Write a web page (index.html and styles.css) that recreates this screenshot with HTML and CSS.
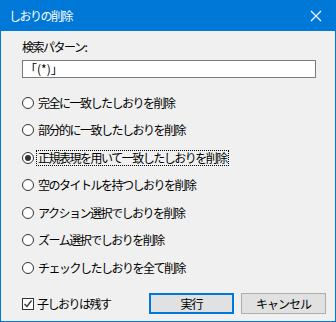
FILE: index.html
```html
<!DOCTYPE html>
<html lang="ja">
  <head>
    <meta charset="UTF-8" />
    <title>しおりの削除</title>
    <link rel="stylesheet" href="styles.css">
  </head>
  <body>
    <div class="window">
      <!-- Title bar -->
      <div class="titlebar">
        <span class="title">しおりの削除</span>
        <svg class="close" width="12" height="12" viewBox="0 0 12 12">
          <path d="M1 1 L11 11 M11 1 L1 11" stroke="#fff" stroke-width="1.2" fill="none" />
        </svg>
      </div>

      <div class="content">
        <div class="label">検索パターン:</div>
        <div class="input">「(*)」</div>

        <div class="options">
          <div class="option"><span class="radio"></span><span class="text">完全に一致したしおりを削除</span></div>
          <div class="option"><span class="radio"></span><span class="text">部分的に一致したしおりを削除</span></div>
          <div class="option"><span class="radio checked"></span><span class="text focus">正規表現を用いて一致したしおりを削除</span></div>
          <div class="option"><span class="radio"></span><span class="text">空のタイトルを持つしおりを削除</span></div>
          <div class="option"><span class="radio"></span><span class="text">アクション選択でしおりを削除</span></div>
          <div class="option"><span class="radio"></span><span class="text">ズーム選択でしおりを削除</span></div>
          <div class="option"><span class="radio"></span><span class="text">チェックしたしおりを全て削除</span></div>
        </div>

        <div class="footer">
          <div class="check">
            <span class="checkbox">
              <svg width="10" height="10" viewBox="0 0 10 10">
                <path d="M1.5 5 L4 7.5 L8.5 1.5" stroke="#333" stroke-width="1.3" fill="none" />
              </svg>
            </span>
            <span class="text">子しおりは残す</span>
          </div>
          <div class="buttons">
            <button class="btn btn-default">実行</button>
            <button class="btn">キャンセル</button>
          </div>
        </div>
      </div>
    </div>
  </body>
</html>
```

FILE: styles.css
```css
body {
  margin: 0;
  padding: 0;
  font-family: "Noto Sans CJK JP", "Noto Sans", sans-serif;
  font-size: 12px;
  color: #000;
}

.window {
  width: 336px;
  height: 322px;
  box-sizing: border-box;
  border: 1px solid #0078d7;
  border-top: none;
  background-color: #f0f0f0;
  display: flex;
  flex-direction: column;
}

/* Title bar */
.titlebar {
  height: 31px;
  background-color: #0078d7;
  color: white;
  display: flex;
  align-items: center;
  justify-content: space-between;
  padding: 0 10px 0 9px;
  margin: 0 -1px;
}

.title {
  letter-spacing: -1.5px;
  line-height: 16px;
}

.close {
  margin-right: 4px;
}

/* Main content */
.content {
  flex-grow: 1;
  padding: 8px 9px 0 21px;
  display: flex;
  flex-direction: column;
}

.label {
  line-height: 16px;
  letter-spacing: -1.5px;
}

.input {
  margin-top: 5px;
  height: 18px;
  width: 294px;
  box-sizing: border-box;
  border: 1px solid #7a7a7a;
  background-color: white;
  padding-left: 2px;
  line-height: 16px;
  letter-spacing: 0;
}

.options {
  margin-top: 11px;
  display: flex;
  flex-direction: column;
}

.option {
  height: 27.5px;
  display: flex;
  align-items: center;
}

.radio {
  width: 12px;
  height: 12px;
  box-sizing: border-box;
  border: 1px solid #333;
  border-radius: 50%;
  background-color: white;
  display: flex;
  align-items: center;
  justify-content: center;
  margin-right: 3px;
}

.radio.checked::after {
  content: "";
  width: 6px;
  height: 6px;
  border-radius: 50%;
  background-color: #333;
}

.text {
  line-height: 14px;
  letter-spacing: -1.5px;
  padding: 0 1px;
}

.focus {
  outline: 1px dotted #000;
}

/* Footer */
.footer {
  margin-top: 11.5px;
  height: 21px;
  display: flex;
  align-items: center;
  justify-content: space-between;
}

.check {
  display: flex;
  align-items: center;
}

.checkbox {
  width: 12px;
  height: 12px;
  box-sizing: border-box;
  border: 1px solid #333;
  background-color: white;
  display: flex;
  align-items: center;
  justify-content: center;
  margin-right: 2px;
}

.buttons {
  display: flex;
  gap: 7px;
}

.btn {
  width: 85px;
  height: 21px;
  box-sizing: border-box;
  border: 1px solid #adadad;
  background-color: #e1e1e1;
  font-family: "Noto Sans CJK JP", "Noto Sans", sans-serif;
  font-size: 12px;
  letter-spacing: -1px;
  padding: 0;
  line-height: 17px;
}

.btn-default {
  border: 2px solid #0078d7;
}
```
